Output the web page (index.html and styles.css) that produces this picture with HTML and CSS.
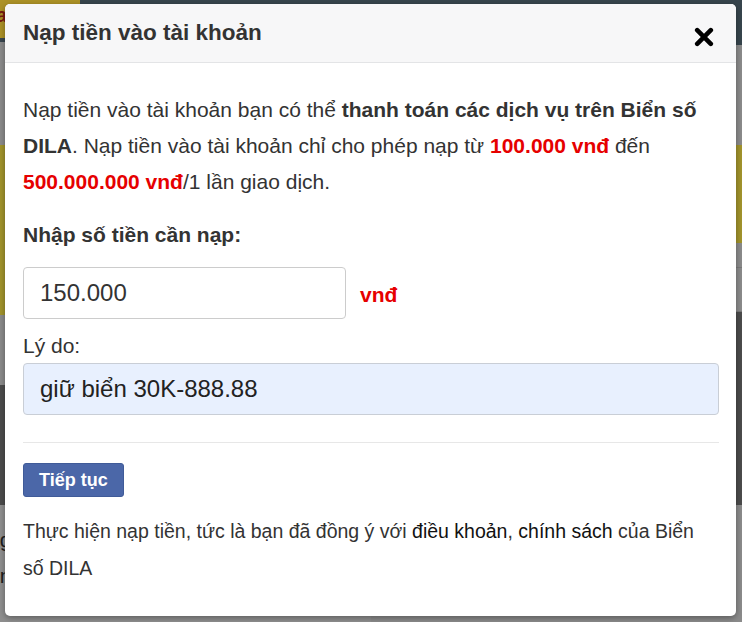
FILE: index.html
```html
<!DOCTYPE html>
<html lang="vi">
<head>
<meta charset="utf-8">
<title>Nạp tiền vào tài khoản</title>
<link rel="stylesheet" href="styles.css">
</head>
<body>
<div class="page">
  <div class="col col-left">
    <div class="topleft">
      <div class="logo"><span class="logo-letter">a</span></div>
      <div class="topbar-rest"></div>
    </div>
    <div class="blk slate-thin"></div>
    <div class="blk gray h103"></div>
    <div class="blk yellow h170"></div>
    <div class="blk gray h70"></div>
    <div class="blk dark h120"></div>
    <div class="blk lightgray rest">
      <div class="peek">ng</div>
      <div class="peek">an</div>
    </div>
  </div>
  <div class="col col-right">
    <div class="blk slate h45"></div>
    <div class="blk gray h100"></div>
    <div class="blk yellow h98"></div>
    <div class="blk gray h25 line-b"></div>
    <div class="blk gray h44 line-b"></div>
    <div class="blk dark h193"></div>
    <div class="blk gray rest"></div>
  </div>
</div>

<div class="modal">
  <div class="modal-header">
    <h4 class="modal-title">Nạp tiền vào tài khoản</h4>
    <button class="close" type="button" aria-label="Đóng">
      <svg width="20" height="20" viewBox="0 0 20 20">
        <path d="M3.2 3.2 L16.8 16.8 M16.8 3.2 L3.2 16.8" stroke="#000" stroke-width="4.6" stroke-linecap="round" fill="none"/>
      </svg>
    </button>
  </div>
  <div class="modal-body">
    <p class="intro">Nạp tiền vào tài khoản bạn có thể <b>thanh toán các dịch vụ trên Biển số DILA</b>. Nạp tiền vào tài khoản chỉ cho phép nạp từ <b class="red">100.000 vnđ</b> đến <b class="red">500.000.000 vnđ</b>/1 lần giao dịch.</p>
    <div class="label-strong">Nhập số tiền cần nạp:</div>
    <div class="amount-row">
      <input class="field field-amount" type="text" value="150.000">
      <span class="unit">vnđ</span>
    </div>
    <div class="label">Lý do:</div>
    <input class="field field-reason" type="text" value="giữ biển 30K-888.88">
    <hr class="divider">
    <button class="btn-primary" type="button">Tiếp tục</button>
    <p class="note">Thực hiện nạp tiền, tức là bạn đã đồng ý với <a href="#">điều khoản</a>, <a href="#">chính sách</a> của Biển số DILA</p>
  </div>
</div>
</body>
</html>
```

FILE: styles.css
```css
html, body {
  margin: 0;
  padding: 0;
}
body {
  width: 742px;
  height: 622px;
  overflow: hidden;
  position: relative;
  font-family: "Liberation Sans", Arial, sans-serif;
  background: #8a8a8a;
}

/* dimmed page behind the modal */
.page {
  display: flex;
  width: 742px;
  height: 622px;
}
.col {
  flex: 1;
  display: flex;
  flex-direction: column;
}
.blk { flex: none; }
.rest { flex: 1; }
.topleft {
  display: flex;
  height: 38px;
}
.logo {
  width: 80px;
  background: #ad9227;
  overflow: hidden;
}
.topbar-rest {
  flex: 1;
  background: #37454d;
}
.logo-letter {
  display: block;
  color: #7a1a10;
  font-weight: bold;
  font-size: 20px;
  line-height: 30px;
  margin-left: -4px;
}
.slate-thin { height: 4px; background: #3a4750; }
.slate { background: #37454d; }
.gray { background: #8b8b8b; }
.lightgray { background: #8f8f8f; }
.yellow { background: #a2942c; }
.dark { background: #4c4c4c; }
.line-b { box-shadow: inset 0 -1px 0 #7a7a7a; }
.h25 { height: 25px; }
.h44 { height: 44px; }
.h45 { height: 45px; }
.h70 { height: 70px; }
.h98 { height: 98px; }
.h100 { height: 100px; }
.h103 { height: 103px; }
.h120 { height: 120px; }
.h170 { height: 170px; }
.h193 { height: 193px; }
.peek {
  font-size: 21px;
  line-height: 36px;
  color: #1e1e1e;
  margin-left: -12px;
}
.peek:first-child { margin-top: 17px; }

/* modal */
.modal {
  position: absolute;
  left: 5px;
  top: 4px;
  width: 731px;
  height: 612px;
  box-sizing: border-box;
  background: #fff;
  border-radius: 5px;
  box-shadow: 0 2px 6px rgba(0,0,0,0.35);
  overflow: hidden;
  color: #333;
}
.modal-header {
  height: 59px;
  box-sizing: border-box;
  background: #f7f7f8;
  border-bottom: 1px solid #e3e4e6;
  display: flex;
  align-items: center;
  justify-content: space-between;
  padding: 0 22px 0 18px;
}
.modal-title {
  margin: 0;
  font-size: 22.5px;
  font-weight: bold;
  color: #333;
  line-height: 30px;
}
.close {
  border: 0;
  background: none;
  padding: 0;
  margin-top: 8px;
  width: 20px;
  height: 20px;
  display: flex;
  cursor: pointer;
}
.modal-body {
  padding: 29px 17px 0 18px;
  font-size: 21px;
}
.intro {
  margin: 0;
  line-height: 36px;
}
.intro b { color: #333; }
.intro b.red, .red { color: #e60000; }
.label-strong {
  margin-top: 17px;
  font-weight: bold;
  line-height: 36px;
}
.amount-row {
  margin-top: 14px;
  display: flex;
  align-items: center;
}
.field {
  display: block;
  box-sizing: border-box;
  height: 52px;
  border: 1px solid #cccccc;
  border-radius: 4px;
  padding: 0 16px;
  font-family: "Liberation Sans", Arial, sans-serif;
  font-size: 24px;
  color: #333;
  background: #fff;
  outline: none;
  margin: 0;
}
.field-amount { width: 323px; }
.unit {
  margin-left: 14px;
  margin-top: 4px;
  color: #e60000;
  font-weight: bold;
  font-size: 21px;
}
.label {
  margin-top: 12px;
  line-height: 30px;
}
.field-reason {
  margin-top: 2px;
  width: 696px;
  background: #e8f0fe;
  border-color: #c9ced6;
  color: #222;
}
.divider {
  margin: 27px 0 0 0;
  border: 0;
  height: 1px;
  background: #e7e7e7;
}
.btn-primary {
  margin-top: 20px;
  height: 34px;
  padding: 0 15px;
  box-sizing: border-box;
  background: #4b67a8;
  border: 1px solid #405b98;
  border-radius: 3px;
  color: #fff;
  font-family: "Liberation Sans", Arial, sans-serif;
  font-weight: bold;
  font-size: 18px;
  display: block;
}
.note {
  margin: 16px 0 0 0;
  font-size: 19.5px;
  line-height: 37px;
  color: #333;
}
.note a {
  color: #111;
  text-decoration: none;
}
```
